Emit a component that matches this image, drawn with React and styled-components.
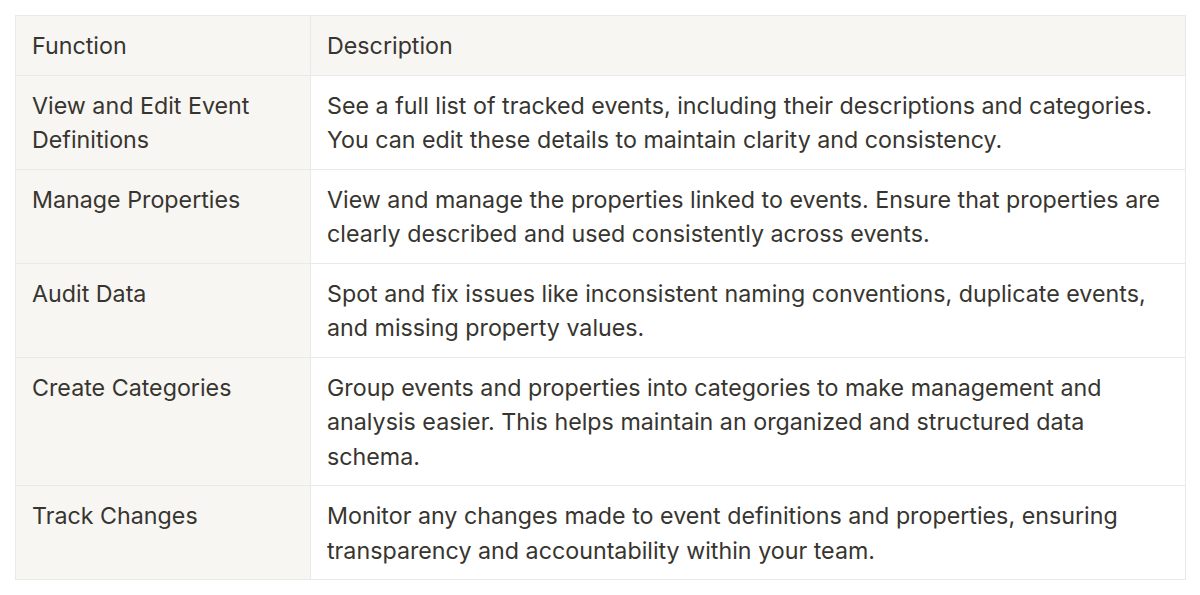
import React from 'react';
import styled, {createGlobalStyle} from "styled-components";

const GlobalStyle = createGlobalStyle`
  html, body {
    margin: 0;
    padding: 0;
    background: #ffffff;
  }
  body {
    font-family: Inter, "Noto Sans", sans-serif;
    color: #37352f;
    -webkit-font-smoothing: antialiased;
  }
`

const Page = styled.div`
  padding: 15px 15px 16px 15px;
`

const Table = styled.table`
  width: 1171px;
  border-collapse: collapse;
  table-layout: fixed;
  font-size: 23.25px;
  line-height: 34.5px;
  border: 1px solid #e9e9e7;

  col.fn {
    width: 295px;
  }
`

const Cell = styled.td`
  border: 1px solid #e9e9e7;
  padding: 13px 14px 11px 16px;
  vertical-align: top;
  background: ${props => props.$shaded ? '#f7f6f3' : '#ffffff'};
  text-align: left;
  font-weight: 400;
`

function App() {
	return (<Page>
		<GlobalStyle/>
		<Table>
			<colgroup>
				<col className="fn"/>
				<col/>
			</colgroup>
			<thead>
			<tr>
				<Cell as="th" $shaded>Function</Cell>
				<Cell as="th" $shaded>Description</Cell>
			</tr>
			</thead>
			<tbody>
			{rows.map((row) => (
				<tr key={row.name}>
					<Cell $shaded>{row.name}</Cell>
					<Cell>{row.text}</Cell>
				</tr>
			))}
			</tbody>
		</Table>
	</Page>);
}

export default App;

const rows = [
	{
		name: 'View and Edit Event Definitions',
		text: 'See a full list of tracked events, including their descriptions and categories. You can edit these details to maintain clarity and consistency.'
	},
	{
		name: 'Manage Properties',
		text: 'View and manage the properties linked to events. Ensure that properties are clearly described and used consistently across events.'
	},
	{
		name: 'Audit Data',
		text: 'Spot and fix issues like inconsistent naming conventions, duplicate events, and missing property values.'
	},
	{
		name: 'Create Categories',
		text: 'Group events and properties into categories to make management and analysis easier. This helps maintain an organized and structured data schema.'
	},
	{
		name: 'Track Changes',
		text: 'Monitor any changes made to event definitions and properties, ensuring transparency and accountability within your team.'
	},
]
